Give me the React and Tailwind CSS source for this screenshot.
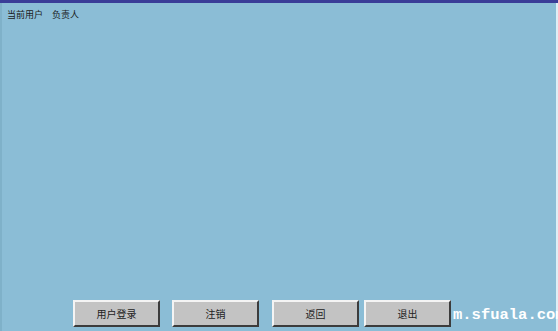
const btn =
  "flex h-[27px] w-[87px] shrink-0 items-center justify-center border-2 border-t-[#f4f4f4] border-l-[#f4f4f4] border-r-[#3c3c3c] border-b-[#3c3c3c] bg-[#c3c3c3] text-[10px] text-[#222]";

export default function App() {
  return (
    <div
      className="flex h-[331px] w-[558px] flex-col overflow-hidden bg-[#8bbdd6] text-black"
      style={{ fontFamily: '"Noto Sans CJK SC", "Liberation Sans", sans-serif' }}
    >
      <div className="h-[3px] shrink-0 bg-[#3a3d98]" />
      <div className="flex flex-1 flex-col border-l-2 border-l-[#7fb1c9] border-r-2 border-r-[#dfeef5]">
        <div className="mt-[6px] flex gap-[9px] pl-[5px] text-[9px] leading-[12px] text-[#1a1a1a]">
          <span>当前用户</span>
          <span>负责人</span>
        </div>

        <div className="flex-1" />

        <div className="mb-[4px] flex items-center pl-[71px]">
          <button className={btn}>用户登录</button>
          <button className={`${btn} ml-[12px]`}>注销</button>
          <button className={`${btn} ml-[13px]`}>返回</button>
          <button className={`${btn} ml-[5px]`}>退出</button>
          <span className="ml-[2px] mt-[4px] whitespace-nowrap font-['Liberation_Mono',monospace] text-[15.5px] font-bold leading-none text-white">
            m.sfuala.com
          </span>
        </div>
      </div>
    </div>
  );
}
